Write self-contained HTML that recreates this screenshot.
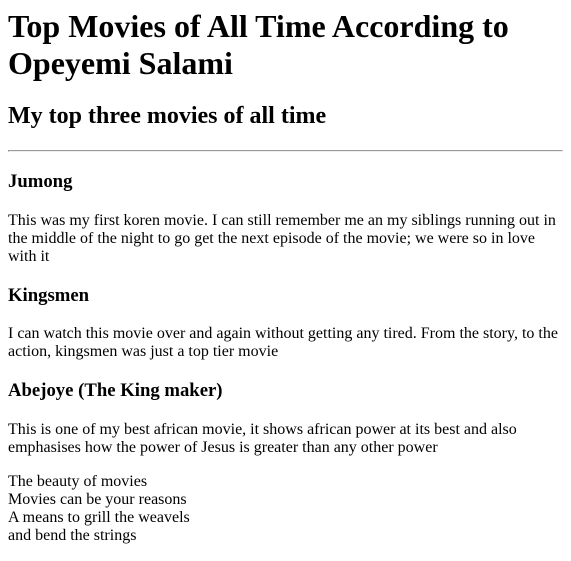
<!DOCTYPE html>
<html><head><meta charset="utf-8"><style>
body{margin:8px;font-family:"Liberation Serif",serif;font-size:16px;color:#000;background:#fff;}
h1{margin-top:0;font-size:32px;}
h2{font-size:24px;}
</style></head><body>
<h1>Top Movies of All Time According to Opeyemi Salami</h1>
<h2>My top three movies of all time</h2>
<hr>
<h3>Jumong</h3>
<p>This was my first koren movie. I can still remember me an my siblings running out in the middle of the night to go get the next episode of the movie; we were so in love with it</p>
<h3>Kingsmen</h3>
<p>I can watch this movie over and again without getting any tired. From the story, to the action, kingsmen was just a top tier movie</p>
<h3>Abejoye (The King maker)</h3>
<p>This is one of my best african movie, it shows african power at its best and also emphasises how the power of Jesus is greater than any other power</p>
<p>The beauty of movies<br>Movies can be your reasons<br>A means to grill the weavels<br>and bend the strings</p>
</body></html>
